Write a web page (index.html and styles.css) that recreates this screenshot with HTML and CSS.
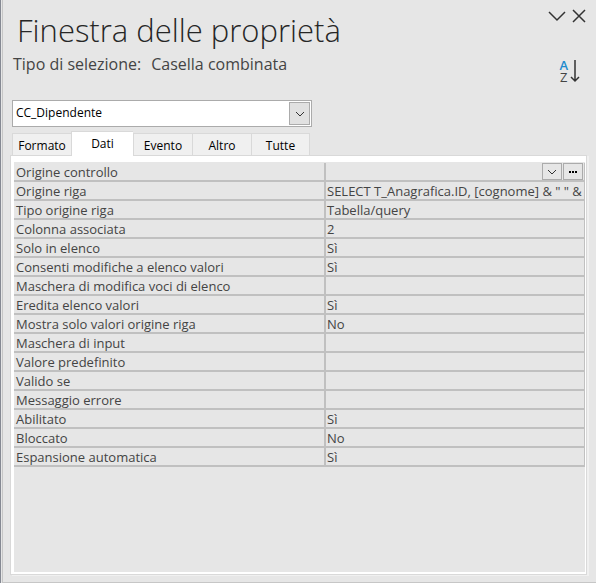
FILE: index.html
```html
<!DOCTYPE html>
<html lang="it">
<head>
  <meta charset="UTF-8" />
  <meta name="viewport" content="width=device-width, initial-scale=1.0"/>
  <title>Finestra delle proprietà</title>
  <link rel="stylesheet" href="styles.css">
</head>
<body>
  <main class="pane">
    <header class="pane-header">
      <div class="titles">
        <h1>Finestra delle proprietà</h1>
        <p class="selection"><span>Tipo di selezione:</span><span>Casella combinata</span></p>
      </div>
      <div class="tools">
        <div class="window-buttons">
          <button type="button" aria-label="Opzioni riquadro">
            <svg width="18" height="14" viewBox="0 0 18 14"><path d="M1 3l8 8 8-8"/></svg>
          </button>
          <button type="button" aria-label="Chiudi">
            <svg width="14" height="14" viewBox="0 0 14 14"><path d="M1 1l12 12M13 1L1 13"/></svg>
          </button>
        </div>
        <button type="button" class="sort" aria-label="Ordina">
          <span class="letters"><span class="a">A</span><span>Z</span></span>
          <svg width="10" height="24" viewBox="0 0 10 24"><path d="M5 1v21M1 18l4 4 4-4"/></svg>
        </button>
      </div>
    </header>

    <div class="combo">
      <select id="objectSelect" aria-label="Oggetto selezionato">
        <option>CC_Dipendente</option>
      </select>
      <span class="combo-arrow">
        <svg width="10" height="6" viewBox="0 0 10 6"><path d="M1 1l4 4 4-4"/></svg>
      </span>
    </div>

    <nav class="tabs" role="tablist">
      <button type="button" role="tab">Formato</button>
      <button type="button" role="tab" class="active" aria-selected="true">Dati</button>
      <button type="button" role="tab">Evento</button>
      <button type="button" role="tab">Altro</button>
      <button type="button" role="tab">Tutte</button>
    </nav>

    <section class="sheet">
      <div class="sheet-body">
        <table class="properties">
          <tr>
            <th scope="row">Origine controllo</th>
            <td class="with-buttons">
              <div class="cell-buttons">
                <button type="button" aria-label="Elenco campi">
                  <svg width="10" height="6" viewBox="0 0 10 6"><path d="M1 1l4 4 4-4"/></svg>
                </button>
                <button type="button" aria-label="Generatore">
                  <svg class="dots" width="8" height="2" viewBox="0 0 8 2"><path d="M0 0h2v2H0zM3 0h2v2H3zM6 0h2v2H6z"/></svg>
                </button>
              </div>
            </td>
          </tr>
          <tr><th scope="row">Origine riga</th><td>SELECT T_Anagrafica.ID, [cognome] &amp; " " &amp;</td></tr>
          <tr><th scope="row">Tipo origine riga</th><td>Tabella/query</td></tr>
          <tr><th scope="row">Colonna associata</th><td>2</td></tr>
          <tr><th scope="row">Solo in elenco</th><td>Sì</td></tr>
          <tr><th scope="row">Consenti modifiche a elenco valori</th><td>Sì</td></tr>
          <tr><th scope="row">Maschera di modifica voci di elenco</th><td></td></tr>
          <tr><th scope="row">Eredita elenco valori</th><td>Sì</td></tr>
          <tr><th scope="row">Mostra solo valori origine riga</th><td>No</td></tr>
          <tr><th scope="row">Maschera di input</th><td></td></tr>
          <tr><th scope="row">Valore predefinito</th><td></td></tr>
          <tr><th scope="row">Valido se</th><td></td></tr>
          <tr><th scope="row">Messaggio errore</th><td></td></tr>
          <tr><th scope="row">Abilitato</th><td>Sì</td></tr>
          <tr><th scope="row">Bloccato</th><td>No</td></tr>
          <tr><th scope="row">Espansione automatica</th><td>Sì</td></tr>
        </table>
      </div>
    </section>
  </main>
</body>
</html>
```
FILE: styles.css
```css
* {
  box-sizing: border-box;
}
body {
  margin: 0;
  background: #e6e6e6;
  color: #444;
  font-family: "Open Sans", "Noto Sans", sans-serif;
  font-size: 12px;
  border-left: 1px solid #858993;
}
button {
  font: inherit;
  color: inherit;
  padding: 0;
  border: 0;
  background: none;
}
svg {
  display: block;
  fill: none;
  stroke: #333;
}
.pane {
  display: flex;
  flex-direction: column;
  min-height: 100vh;
  margin-left: 1px;
  padding: 8px 9px 7px 7px;
  border-left: 1px solid #c6c6c6;
  border-bottom: 1px solid #c6c6c6;
}

/* title and window buttons */
.pane-header {
  display: flex;
  justify-content: space-between;
  height: 92px;
  padding-left: 3px;
}
h1 {
  margin: 0 0 0 4px;
  font-size: 31px;
  font-weight: 300;
  line-height: 44px;
  color: #262626;
}
.selection {
  display: flex;
  gap: 10px;
  margin: 0;
  font-size: 16px;
  line-height: 24px;
}
.tools {
  display: flex;
  flex-direction: column;
  align-items: flex-end;
  gap: 36px;
  padding-right: 1px;
}
.window-buttons {
  display: flex;
  gap: 6px;
  padding-top: 1px;
}
.window-buttons svg {
  stroke-width: 1.5;
}
.sort {
  display: flex;
  gap: 2px;
  margin-right: 6px;
}
.sort svg {
  stroke-width: 1.5;
}
.letters {
  display: flex;
  flex-direction: column;
  font-size: 13px;
  line-height: 12px;
}
.letters .a {
  color: #1e8bcd;
  font-weight: 600;
}

/* object drop-down */
.combo {
  position: relative;
  width: 300px;
  margin-left: 2px;
}
.combo select {
  display: block;
  width: 100%;
  height: 27px;
  padding: 0 24px 2px 3px;
  border: 1px solid #ababab;
  border-radius: 0;
  background: #fff;
  color: #000;
  font: inherit;
  appearance: none;
}
.combo-arrow {
  position: absolute;
  top: 2px;
  right: 2px;
  bottom: 2px;
  width: 21px;
  display: flex;
  align-items: center;
  justify-content: center;
  border: 1px solid #ababab;
  background: #e1e1e1;
  pointer-events: none;
}

/* tabs */
.tabs {
  display: flex;
  align-items: flex-end;
  height: 24px;
  margin: 4px 0 0 2px;
}
.tabs button {
  width: 59px;
  height: 22px;
  padding-top: 2px;
  border: 1px solid #d9d9d9;
  border-width: 1px 0 0 1px;
  background: #f0f0f0;
  color: #000;
}
.tabs button:last-child {
  border-right-width: 1px;
}
.tabs .active {
  position: relative;
  width: 62px;
  height: 25px;
  margin-bottom: -1px;
  padding: 0 0 2px;
  background: #fff;
}

/* property sheet */
.sheet {
  display: flex;
  flex: 1;
  padding: 6px 1px 2px 3px;
  border: 1px solid #d9d9d9;
  background: #fff;
  box-shadow: 2px 1px 0 #f0f0f0;
}
.sheet-body {
  flex: 1;
  padding-top: 1px;
  background: #e6e6e6;
}
.properties {
  width: 100%;
  table-layout: fixed;
  border-collapse: separate;
  border-spacing: 0;
  border-right: 1px solid #c0c0c0;
  font-size: 13px;
}
.properties th,
.properties td {
  height: 19px;
  padding: 1px 0 0 2px;
  border-bottom: 2px solid #c0c0c0;
  font-weight: 400;
  line-height: 16px;
  text-align: left;
  white-space: nowrap;
  overflow: hidden;
}
.properties th {
  width: 312px;
  border-right: 2px solid #c0c0c0;
}
.properties td {
  padding-left: 1px;
}
.properties .with-buttons {
  padding: 0;
}
.cell-buttons {
  display: flex;
  justify-content: flex-end;
  gap: 1px;
  padding-right: 1px;
}
.cell-buttons button {
  display: flex;
  align-items: center;
  justify-content: center;
  width: 20px;
  height: 17px;
  border: 1px solid #ababab;
}
.cell-buttons .dots {
  fill: #000;
  stroke: none;
}
```
